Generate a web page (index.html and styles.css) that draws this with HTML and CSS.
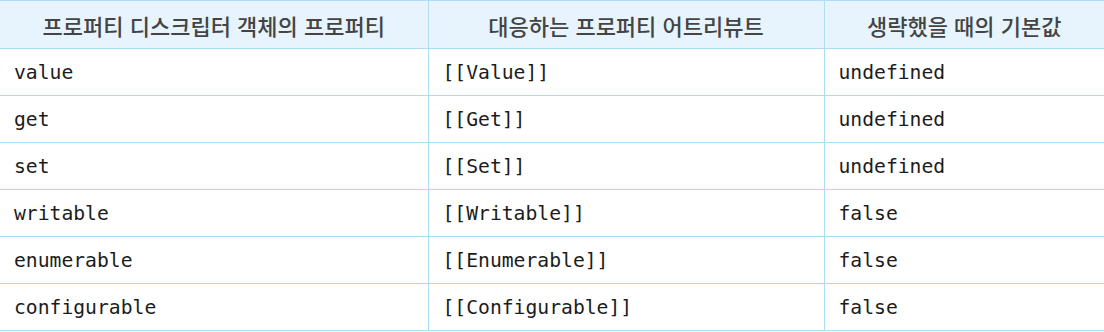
FILE: index.html
```html
<!DOCTYPE html>
<html lang="ko">
<head>
<meta charset="utf-8">
<link rel="stylesheet" href="styles.css">
</head>
<body>
<table class="attr-table">
  <colgroup>
    <col class="c1">
    <col class="c2">
    <col class="c3">
  </colgroup>
  <thead>
    <tr>
      <th>프로퍼티 디스크립터 객체의 프로퍼티</th>
      <th>대응하는 프로퍼티 어트리뷰트</th>
      <th>생략했을 때의 기본값</th>
    </tr>
  </thead>
  <tbody>
    <tr><td>value</td><td>[[Value]]</td><td>undefined</td></tr>
    <tr><td>get</td><td>[[Get]]</td><td>undefined</td></tr>
    <tr><td>set</td><td>[[Set]]</td><td>undefined</td></tr>
    <tr><td>writable</td><td>[[Writable]]</td><td>false</td></tr>
    <tr><td>enumerable</td><td>[[Enumerable]]</td><td>false</td></tr>
    <tr><td>configurable</td><td>[[Configurable]]</td><td>false</td></tr>
  </tbody>
</table>
</body>
</html>
```
FILE: styles.css
```css
html, body {
  margin: 0;
  padding: 0;
  background: #ffffff;
}

.attr-table {
  width: 1104px;
  border-collapse: collapse;
  table-layout: fixed;
  border-top: 1px solid #aedcf5;
  border-bottom: 1px solid #aedcf5;
}

.c1 { width: 428px; }
.c2 { width: 396px; }
.c3 { width: 280px; }

.attr-table th {
  height: 48px;
  padding: 0 8px;
  box-sizing: border-box;
  background: #e8f4fd;
  color: #444444;
  font-family: "Noto Sans CJK KR", "Noto Sans", sans-serif;
  font-weight: 500;
  font-size: 22px;
  text-align: center;
  vertical-align: middle;
  border-bottom: 1px solid #aedcf5;
  border-left: 1px solid #aedcf5;
}

.attr-table td {
  height: 46px;
  padding: 0 0 0 14px;
  color: #1c1c1c;
  font-family: "DejaVu Sans Mono", monospace;
  font-size: 19.7px;
  text-align: left;
  vertical-align: middle;
  border-top: 1px solid #aedcf5;
  border-left: 1px solid #aedcf5;
}

.attr-table th:first-child,
.attr-table td:first-child {
  border-left: none;
}
```
